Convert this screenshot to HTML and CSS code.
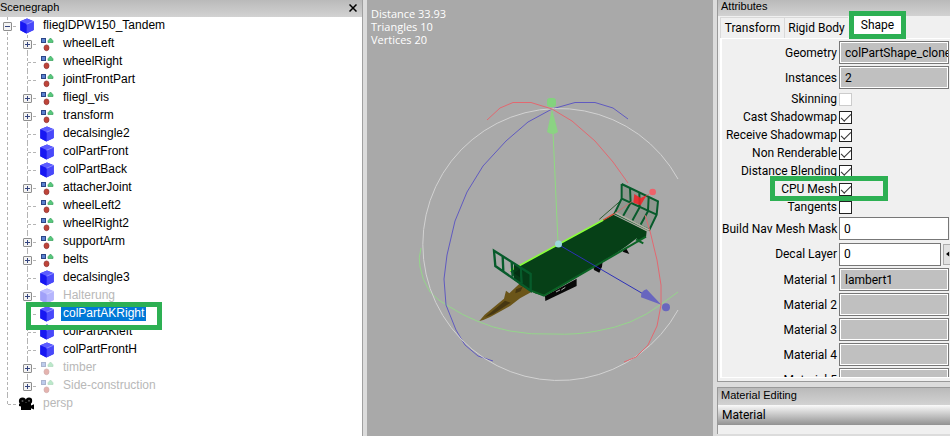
FILE: index.html
```
<!DOCTYPE html>
<html lang="en">
<head>
<meta charset="utf-8">
<title>Scenegraph editor</title>
<link rel="stylesheet" href="styles.css">
</head>
<body>
<svg class="defs" aria-hidden="true">
  <symbol id="cube" viewBox="0 0 14 16">
    <path d="M7 .5 13.7 3.2V12L6.4 15.5.3 12.2V3.2z" fill="#2a2aee"/>
    <path d="M7 .5 13.7 3.2 6.6 6.2.3 3.2z" fill="#5c5cff"/>
    <path d="M6.6 6.2 13.7 3.2V12L6.4 15.5z" fill="#4848fb"/>
    <path d="M.3 3.2 6.6 6.2 6.4 15.5.3 12.2z" fill="#1717f2"/>
    <path d="M6.6 6.2 13.7 3.2" stroke="#8c8cff" fill="none"/>
  </symbol>
  <symbol id="group" viewBox="0 0 14 16">
    <rect x="1.5" y="2.5" width="4" height="4" fill="#5b82d0" stroke="#2c4688"/>
    <path d="M8 6.5V4.8L10.5 2 13 4.8V6.5z" fill="#56c87c" stroke="#3aa05c" stroke-width=".7"/>
    <ellipse cx="6.500" cy="11.800" rx="2.500" ry="2.900" fill="#bf4438" stroke="#8e3030" stroke-width=".7"/>
  </symbol>
  <symbol id="camera" viewBox="0 0 16 14">
    <circle cx="4.5" cy="4" r="3.6"/><circle cx="11" cy="3.8" r="3.2"/>
    <path d="M3 6h10v2.5l3-1.3v5.3l-3-1.3V13H3V9.500L1 9V7z"/>
    <circle cx="4.500" cy="4" r="1" fill="#555"/><circle cx="11" cy="3.8" r="1" fill="#555"/>
  </symbol>
</svg>
<div class="app">
  <section class="scene">
    <header class="bar"><h2>Scenegraph</h2>
      <button class="close" aria-label="Close"><svg viewBox="0 0 8 8"><path d="M.5.5 7.500 7.500M7.500.5.5 7.500" stroke="#000" stroke-width="1.500"/></svg></button>
    </header>
    <ul class="tree">
      <li><div class="row"><button class="exp minus" aria-label="Collapse"></button><svg class="icon"><use href="#cube"/></svg><span>flieglDPW150_Tandem</span></div>
        <ul>
          <li><div class="row"><button class="exp" aria-label="Expand"></button><svg class="icon"><use href="#group"/></svg><span>wheelLeft</span></div></li>
          <li><div class="row"><svg class="icon"><use href="#group"/></svg><span>wheelRight</span></div></li>
          <li><div class="row"><svg class="icon"><use href="#group"/></svg><span>jointFrontPart</span></div></li>
          <li><div class="row"><button class="exp" aria-label="Expand"></button><svg class="icon"><use href="#group"/></svg><span>fliegl_vis</span></div></li>
          <li><div class="row"><button class="exp" aria-label="Expand"></button><svg class="icon"><use href="#group"/></svg><span>transform</span></div></li>
          <li><div class="row"><svg class="icon"><use href="#cube"/></svg><span>decalsingle2</span></div></li>
          <li><div class="row"><svg class="icon"><use href="#cube"/></svg><span>colPartFront</span></div></li>
          <li><div class="row"><svg class="icon"><use href="#cube"/></svg><span>colPartBack</span></div></li>
          <li><div class="row"><button class="exp" aria-label="Expand"></button><svg class="icon"><use href="#group"/></svg><span>attacherJoint</span></div></li>
          <li><div class="row"><svg class="icon"><use href="#group"/></svg><span>wheelLeft2</span></div></li>
          <li><div class="row"><svg class="icon"><use href="#group"/></svg><span>wheelRight2</span></div></li>
          <li><div class="row"><button class="exp" aria-label="Expand"></button><svg class="icon"><use href="#group"/></svg><span>supportArm</span></div></li>
          <li><div class="row"><button class="exp" aria-label="Expand"></button><svg class="icon"><use href="#group"/></svg><span>belts</span></div></li>
          <li><div class="row"><svg class="icon"><use href="#cube"/></svg><span>decalsingle3</span></div></li>
          <li><div class="row off"><button class="exp" aria-label="Expand"></button><svg class="icon"><use href="#cube"/></svg><span>Halterung</span></div></li>
          <li><div class="row sel"><svg class="icon"><use href="#cube"/></svg><span>colPartAKRight</span><i class="mark mark-node"></i></div></li>
          <li><div class="row"><svg class="icon"><use href="#cube"/></svg><span>colPartAKleft</span></div></li>
          <li><div class="row"><svg class="icon"><use href="#cube"/></svg><span>colPartFrontH</span></div></li>
          <li><div class="row off"><button class="exp" aria-label="Expand"></button><svg class="icon"><use href="#group"/></svg><span>timber</span></div></li>
          <li><div class="row off"><button class="exp" aria-label="Expand"></button><svg class="icon"><use href="#group"/></svg><span>Side-construction</span></div></li>
        </ul>
      </li>
      <li><div class="row persp"><svg class="icon cam"><use href="#camera"/></svg><span>persp</span></div></li>
    </ul>
  </section>

  <main class="view">
    <p class="stats">Distance 33.93<br>Triangles 10<br>Vertices 20</p>
    <svg class="canvas" viewBox="367 0 346 436" role="img" aria-label="Trailer with rotation gizmo">
      <g fill="none" stroke-width="1">
        <path d="M421 248Q418 258 420 267Q422 280 430 292Q438 301 450 307Q462 315 477 321Q493 328 510 331Q531 335 553 334Q577 335 597 331Q615 328 630 322Q647 315 660 305L678 292" stroke="#95d58b"/>
        <path d="M628 119 613 108 595 102.500H575L552 109 528 122 506 141 483 166 467 192 455 221 447 255 444 279 446 305 456 330 465 345 478 356 493 361" stroke="#605ac0"/>
        <path d="M678 179A136 136 0 1 0 678 310" stroke="#d2d2d2"/>
      </g>
      <g transform="translate(470 170) scale(.3333)">
        <path d="M28 453 44 434 102 386 108 362 118 370 150 340 195 360 150 385 120 408 62 440 40 450z" fill="#6b5519"/>
        <path d="M45 442 105 392 122 398 70 432zM138 358 158 350 152 364 136 370z" fill="#463712"/>
        <path d="M225 378 320 326V348L226 393z" fill="#080808"/>
        <path d="M258 366 270 360M274 360 286 352" stroke="#aaa" stroke-width="3"/>
        <path d="M370 290 398 274 396 290 388 308 372 300zM458 242 468 234 478 252 460 246z" fill="#080808"/>
        <path d="M120 302 400 150 430 134 530 184 528 202 505 212 500 205 470 228 432 254 400 272 380 286 240 370 222 377 195 370 150 345z" fill="#064017"/>
        <path d="M183 362 222 377 528 200M498 208 520 220" fill="none" stroke="#0b6325" stroke-width="6"/>
        <path d="M432 132 530 184 538 180 440 128z" fill="#aaa89a"/>
        <path d="M120 302 400 150" stroke="#8bff3b" stroke-width="5"/>
        <path d="M400 150 434 130" stroke="#d84a30" stroke-width="4"/>
        <path d="M388 148 450 94" stroke="#315c32" stroke-width="3"/>
        <path d="M132 278 182 312V362L132 330z" fill="#053b17"/>
        <path d="M72 242 182 312V362L76 288zM98 260 100 303M125 276 128 320M152 294 155 340" fill="none" stroke="#075b2b" stroke-width="7"/>
        <path d="M132 310 150 296V322z" fill="#052e12"/>
        <path d="M455 42 564 94 560 134 538 180 434 130 455 86z" fill="#8f978f"/>
        <path d="M455 42 564 94 560 134 538 180 434 130 455 86 560 134M455 42V88M480 54 482 98 458 140M508 68 509 112 486 154M536 82 534 124 511 166" fill="none" stroke="#075b2b" stroke-width="6"/>
        <path d="M436 128 538 180" stroke="#b4afa5" stroke-width="5"/>
        <path d="M430 134 490 92 505 90M538 72 512 88" stroke="#e26161" stroke-width="2" fill="none"/>
        <path d="M493 72 512 84 530 76 512 106 490 98z" fill="#f31f24" opacity=".85"/>
        <circle cx="548" cy="66" r="10" fill="#ee626b"/>
        <path d="M266 224 520 372" stroke="#2c30b8" stroke-width="3"/>
        <path d="M530 358 574 404 513 382Q512 362 530 358z" fill="#6866bf"/>
        <circle cx="588" cy="412" r="12" fill="#6a67bd"/>
      </g>
      <path d="M487 120 500 108 513 102.500H531L552 109 572 121 595 141 613 162 628 183M645 215 650 231 657 260 661 285V305L657 326 648 345 636 357 624 362" fill="none" stroke="#e26870"/>
      <path d="M553 132 558 242" stroke="#8fdb80"/>
      <path d="M552 109 558 132Q553 136 547 132z" fill="#8bd383"/>
      <rect x="547" y="98" width="9" height="9" rx="3" fill="#83d27e"/>
      <circle cx="558.500" cy="244" r="3.500" fill="#9cdadc"/>
    </svg>
  </main>

  <aside class="side">
    <section class="attrs">
      <header class="bar"><h2>Attributes</h2></header>
      <div class="tabs" role="tablist">
        <button role="tab">Transform</button><button role="tab">Rigid Body</button><button role="tab" class="active" aria-selected="true">Shape</button>
      </div>
      <form class="form">
        <div class="field"><label for="geo">Geometry</label><input id="geo" type="text" class="ro" readonly value="colPartShape_clone"></div>
        <div class="field"><label for="inst">Instances</label><input id="inst" type="text" class="ro" readonly value="2"></div>
        <div class="field check"><label for="skin">Skinning</label><input id="skin" type="checkbox" disabled></div>
        <div class="field check"><label for="cast">Cast Shadowmap</label><input id="cast" type="checkbox" checked></div>
        <div class="field check"><label for="recv">Receive Shadowmap</label><input id="recv" type="checkbox" checked></div>
        <div class="field check"><label for="nonr">Non Renderable</label><input id="nonr" type="checkbox" checked></div>
        <div class="field check"><label for="dist">Distance Blending</label><input id="dist" type="checkbox" checked></div>
        <div class="field check"><label for="cpu">CPU Mesh</label><input id="cpu" type="checkbox" checked><i class="mark mark-cpu"></i></div>
        <div class="field check"><label for="tang">Tangents</label><input id="tang" type="checkbox"></div>
        <div class="field"><label for="nav">Build Nav Mesh Mask</label><input id="nav" type="text" value="0"></div>
        <div class="field spin"><label for="decal">Decal Layer</label><input id="decal" type="text" value="0"><button type="button" aria-label="Decrease"><svg viewBox="0 0 5 6"><path d="M0 3 4 0V6z"/></svg></button></div>
        <div class="field"><label for="m1">Material 1</label><input id="m1" type="text" class="ro" readonly value="lambert1"></div>
        <div class="field"><label for="m2">Material 2</label><input id="m2" type="text" class="ro" readonly></div>
        <div class="field"><label for="m3">Material 3</label><input id="m3" type="text" class="ro" readonly></div>
        <div class="field"><label for="m4">Material 4</label><input id="m4" type="text" class="ro" readonly></div>
        <div class="field"><label for="m5">Material 5</label><input id="m5" type="text" class="ro" readonly></div>
      </form>
    </section>
    <section class="editing">
      <header class="bar"><h2>Material Editing</h2></header>
      <h3>Material</h3>
    </section>
  </aside>
</div>
</body>
</html>
```
FILE: styles.css
```
* { box-sizing: border-box; }
body { margin: 0; font: 12px/18px "Liberation Sans", Arial, sans-serif; color: #000; background: #dcdcdc; }
ul { list-style: none; margin: 0; padding: 0; }
button { margin: 0; padding: 0; font: inherit; color: inherit; }
.defs { position: absolute; width: 0; height: 0; }
.app { display: grid; grid-template-columns: 367px 1fr 237px; height: 100vh; }

.bar { display: flex; align-items: flex-start; justify-content: space-between; height: 17px; background: linear-gradient(#bababa, #d2d2d2); }
.bar h2 { margin: 0; font-size: 11px; font-weight: normal; line-height: 14px; }
.mark { position: absolute; border: 5px solid #2db053; z-index: 2; pointer-events: none; }

.scene { background: #fff; border-right: 4px solid #dcdcdc; box-shadow: inset -1px 0 #a0a0a0; overflow: hidden; }
.scene .bar { margin-right: 1px; }
.close { width: 8px; height: 8px; margin: 4px 5px 0; border: 0; background: none; }
.close svg { display: block; }

.row { position: relative; display: flex; align-items: center; height: 18px; padding-left: 20px; }
.row span { padding: 0 2px; margin-left: 7px; line-height: 16px; margin-bottom: 2px; }
.icon { flex: none; width: 14px; height: 16px; }
.cam { width: 16px; height: 14px; margin-left: -2px; }
.tree li { position: relative; }
.tree li::before { content: ""; position: absolute; left: 7px; top: 0; bottom: 0; border-left: 1px dashed #b4b4b4; }
.tree li:last-child::before { bottom: auto; height: 9px; }
.row::before { content: ""; position: absolute; left: 8px; top: 9px; width: 8px; border-top: 1px dashed #b4b4b4; }
.tree ul { margin-left: 20px; }
.exp { position: absolute; left: 3px; top: 5px; width: 9px; height: 9px; border: 1px solid #8e8e8e; border-radius: 1px; background: linear-gradient(#35457f, #35457f) center / 5px 1px no-repeat, linear-gradient(#35457f, #35457f) center / 1px 5px no-repeat, #f4f4f4; }
.minus { background: linear-gradient(#35457f, #35457f) center / 5px 1px no-repeat, #f4f4f4; }
.off span, .persp span { color: #b8b8b8; }
.off .icon { opacity: .4; }
.sel span { background: #0078d7; color: #fff; }
.mark-node { left: 6px; right: 201px; top: -3px; height: 28px; }

.view { position: relative; background: #a9a9a9; overflow: hidden; }
.stats { position: absolute; left: 4px; top: 7px; margin: 0; font: 11px/13px "Open Sans", sans-serif; color: #fff; }
.canvas { display: block; width: 100%; height: 100%; }

.side { display: flex; flex-direction: column; gap: 5px; padding: 0 0 2px 4px; font: 12px/16px Roboto, sans-serif; min-width: 0; overflow: hidden; }
.side h2 { font-family: "Liberation Sans", Arial, sans-serif; padding-left: 3px; }
.attrs { flex: 1; min-height: 0; display: flex; flex-direction: column; border-left: 1px solid #999; border-bottom: 1px solid #999; background: #f0f0f0; }
.attrs .bar { height: 16px; flex: none; }
.attrs .bar h2 { line-height: 12px; }
.tabs { display: flex; flex: none; height: 22px; padding: 1px 0 0 2px; }
.tabs button { width: 64px; border: 1px solid #d9d9d9; border-width: 1px 0 0 1px; background: #f0f0f0; white-space: nowrap; }
.tabs .active { position: relative; z-index: 2; width: 57px; height: 28px; margin: -6px 0 0 1px; padding-bottom: 1px; border: 5px solid #2db053; background: #fff; }
.form { flex: 1; min-height: 0; margin: 0 0 3px 2px; padding-top: 1px; border: solid #fff; border-width: 1px 0 1px 2px; overflow: hidden; }
.field { position: relative; display: grid; grid-template-columns: 115px 1fr; column-gap: 2px; align-items: center; height: 25px; padding-right: 1px; }
.field label { text-align: right; white-space: nowrap; }
.field input[type="text"] { width: 100%; height: 23px; min-width: 0; padding: 0 4px; border: 1px solid #777; border-radius: 0; background: #fff; font: inherit; color: #000; outline: 0; }
.field .ro[type="text"] { padding: 0 0 0 5px; box-shadow: inset 0 0 0 1px #fff; background: #c0c0c0; }
.check { height: 18px; }
.check input { appearance: none; width: 13px; height: 13px; margin: 0; border: 1px solid #222; background: #fff; }
.check input:checked::before { content: ""; display: block; width: 9px; height: 4px; margin: 2px 1px; border: solid #333; border-width: 0 0 1px 1px; transform: rotate(-45deg); }
.check input:disabled { border-color: #ccc; }
.mark-cpu { left: 48px; right: 62px; top: -4px; height: 25px; }
.spin { grid-template-columns: 115px 1fr 7px; column-gap: 2px; height: 26px; padding: 0; }
.spin button { display: flex; align-items: center; justify-content: flex-end; height: 21px; border: 1px solid #adadad; border-right: 0; background: #e1e1e1; }
.spin svg { width: 4px; height: 6px; }

.editing { height: 47px; border-left: 1px solid #999; border-top: 1px solid #999; background: #f0f0f0; }
.editing h3 { margin: 0; padding: 0 4px; font-size: 12px; font-weight: normal; line-height: 20px; background: linear-gradient(#fafafa, #929292); }
```
